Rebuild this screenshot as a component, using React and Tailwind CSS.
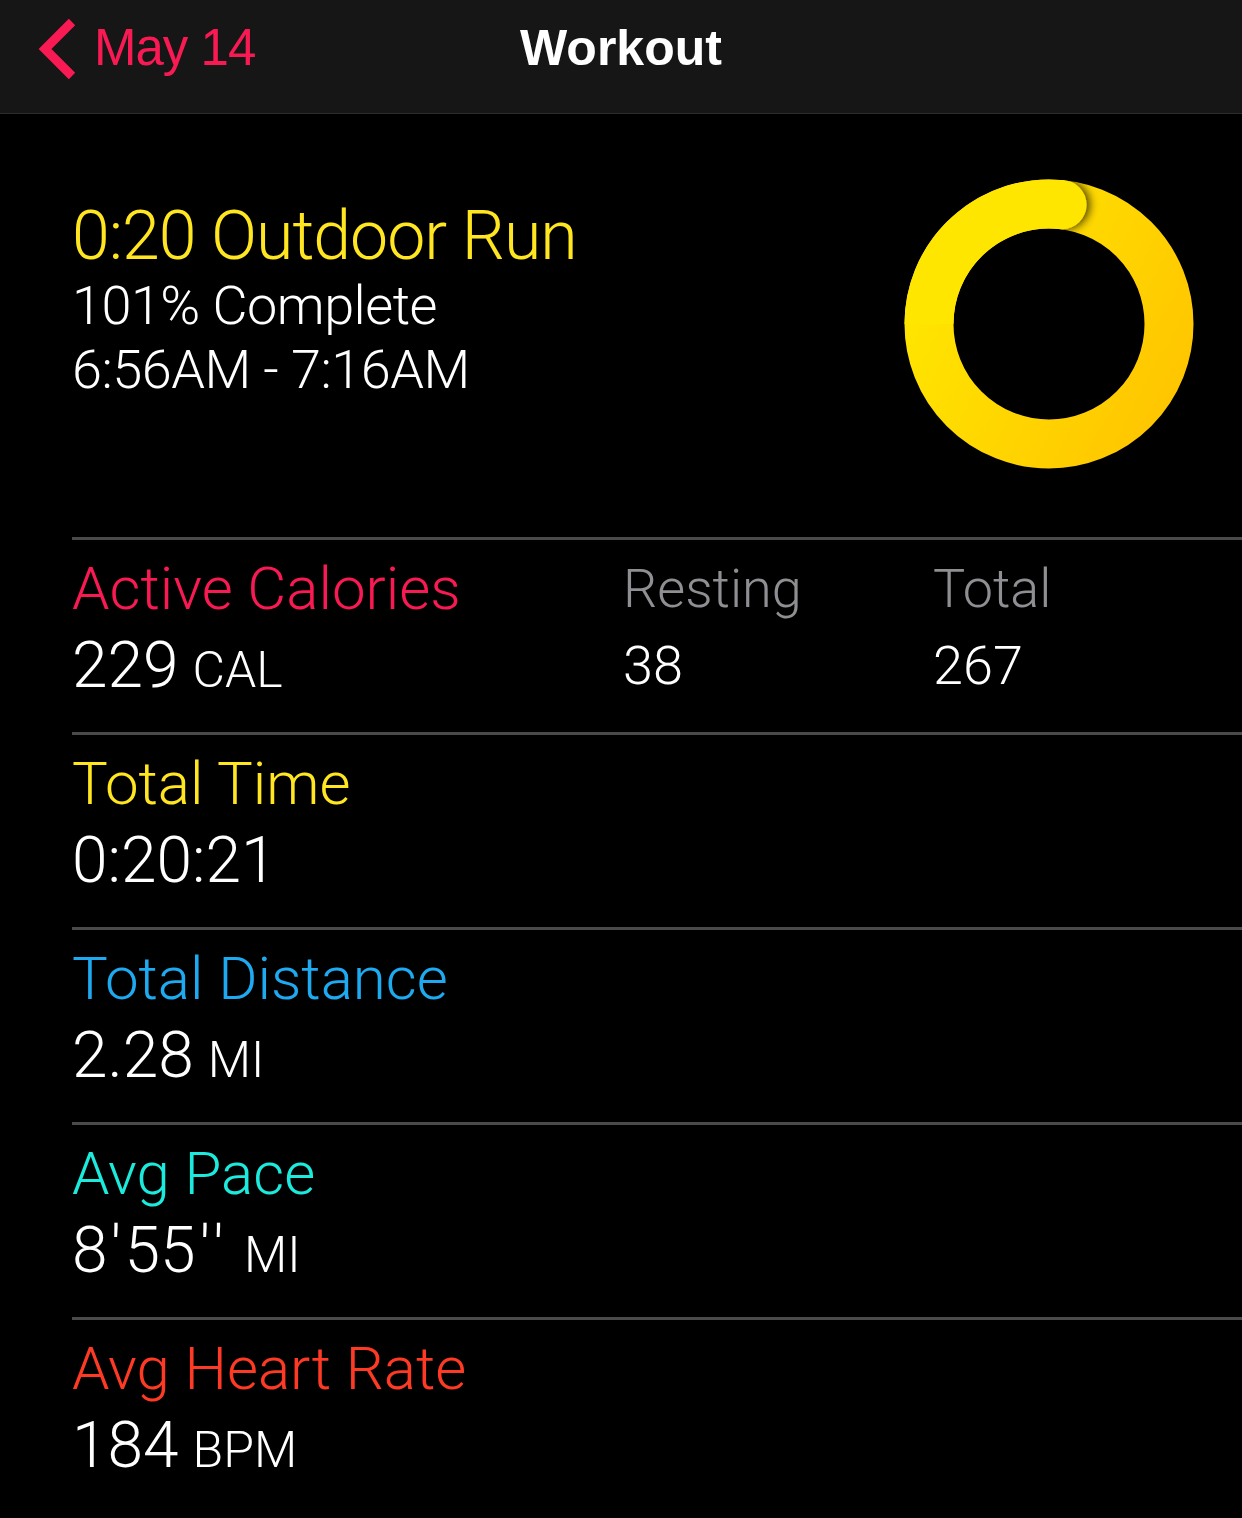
import React from "react";

const FONT = { fontFamily: "Roboto, 'Noto Sans', sans-serif" };
const HEAD_FONT = { fontFamily: "'Liberation Sans', Arial, sans-serif" };

function Ring() {
  return (
    <svg width="292" height="292" viewBox="0 0 292 292" className="block">
      <defs>
        <linearGradient id="ringGrad" gradientUnits="userSpaceOnUse" x1="20" y1="60" x2="280" y2="200">
          <stop offset="0" stopColor="#ffe800" />
          <stop offset="1" stopColor="#ffc600" />
        </linearGradient>
        <filter id="capShadow" x="-100%" y="-100%" width="300%" height="300%">
          <feDropShadow dx="3" dy="0" stdDeviation="5" floodColor="#000" floodOpacity="0.75" />
        </filter>
      </defs>
      <circle cx="146" cy="146" r="120" fill="none" stroke="url(#ringGrad)" strokeWidth="49" />
      {/* end cap of the lap past 100%, carries the shadow */}
      <circle cx="159" cy="26.7" r="24.5" fill="#ffe600" filter="url(#capShadow)" />
      <path d="M 26 146 A 120 120 0 0 1 159 26.7" fill="none" stroke="#ffe600" strokeWidth="49" />
    </svg>
  );
}

function Row({ label, color, value, unit }) {
  return (
    <div className="border-t-[3px] border-[#4a4a4a] h-[195px] pt-[14px] font-light">
      <div className={`text-[60px] leading-[70px] ${color}`}>{label}</div>
      <div className="text-white text-[64px] leading-[80px] mt-[2px]">
        {value}
        {unit ? <span className="text-[50px] ml-[14px]">{unit}</span> : null}
      </div>
    </div>
  );
}

export default function App() {
  return (
    <div className="w-[1242px] h-[1518px] bg-black overflow-hidden" style={FONT}>
      <div className="h-[114px] bg-[#161616] border-b border-[#2c2c2c] relative flex items-center pb-[16px]">
        <div className="flex items-center pl-[38px]">
          <svg width="40" height="62" viewBox="0 0 40 62">
            <path d="M34 4 L7 31 L34 58" fill="none" stroke="#fa1a53" strokeWidth="9" strokeLinecap="butt" strokeLinejoin="miter" />
          </svg>
          <span className="text-[#fa1a53] text-[51px] ml-[16px] tracking-[-1px]" style={HEAD_FONT}>
            May 14
          </span>
        </div>
        <div className="absolute inset-0 flex items-center justify-center pb-[16px]">
          <span className="text-white text-[50px] font-bold" style={HEAD_FONT}>
            Workout
          </span>
        </div>
      </div>

      <div className="pl-[72px]">
        <div className="flex h-[423px]">
          <div className="flex-1 pt-[84px] font-light">
            <div className="text-[#ffe620] text-[68px] leading-[76px] tracking-[-1px]">0:20 Outdoor Run</div>
            <div className="text-white text-[54px] leading-[64px] tracking-[-0.5px]">101% Complete</div>
            <div className="text-white text-[54px] leading-[64px] tracking-[-0.5px]">6:56AM - 7:16AM</div>
          </div>
          <div className="pt-[64px] pr-[47px]">
            <Ring />
          </div>
        </div>

        <div className="border-t-[3px] border-[#4a4a4a] h-[195px] pt-[14px] flex font-light">
          <div className="w-[551px]">
            <div className="text-[60px] leading-[70px] text-[#fa1a53]">Active Calories</div>
            <div className="text-white text-[64px] leading-[80px] mt-[2px]">
              229<span className="text-[50px] ml-[14px]">CAL</span>
            </div>
          </div>
          <div className="w-[310px]">
            <div className="text-[54px] leading-[70px] text-[#8e8e93]">Resting</div>
            <div className="text-white text-[54px] leading-[80px] mt-[2px]">38</div>
          </div>
          <div>
            <div className="text-[54px] leading-[70px] text-[#8e8e93]">Total</div>
            <div className="text-white text-[54px] leading-[80px] mt-[2px]">267</div>
          </div>
        </div>

        <Row label="Total Time" color="text-[#ffe620]" value="0:20:21" />
        <Row label="Total Distance" color="text-[#1eaaf1]" value="2.28" unit="MI" />
        <Row
          label="Avg Pace"
          color="text-[#1beadc]"
          value={
            <>
              8<span className="mx-[3px]">'</span>55<span className="ml-[4px] tracking-[6px]">''</span>
            </>
          }
          unit="MI"
        />
        <Row label="Avg Heart Rate" color="text-[#ff3a24]" value="184" unit="BPM" />
      </div>
    </div>
  );
}
